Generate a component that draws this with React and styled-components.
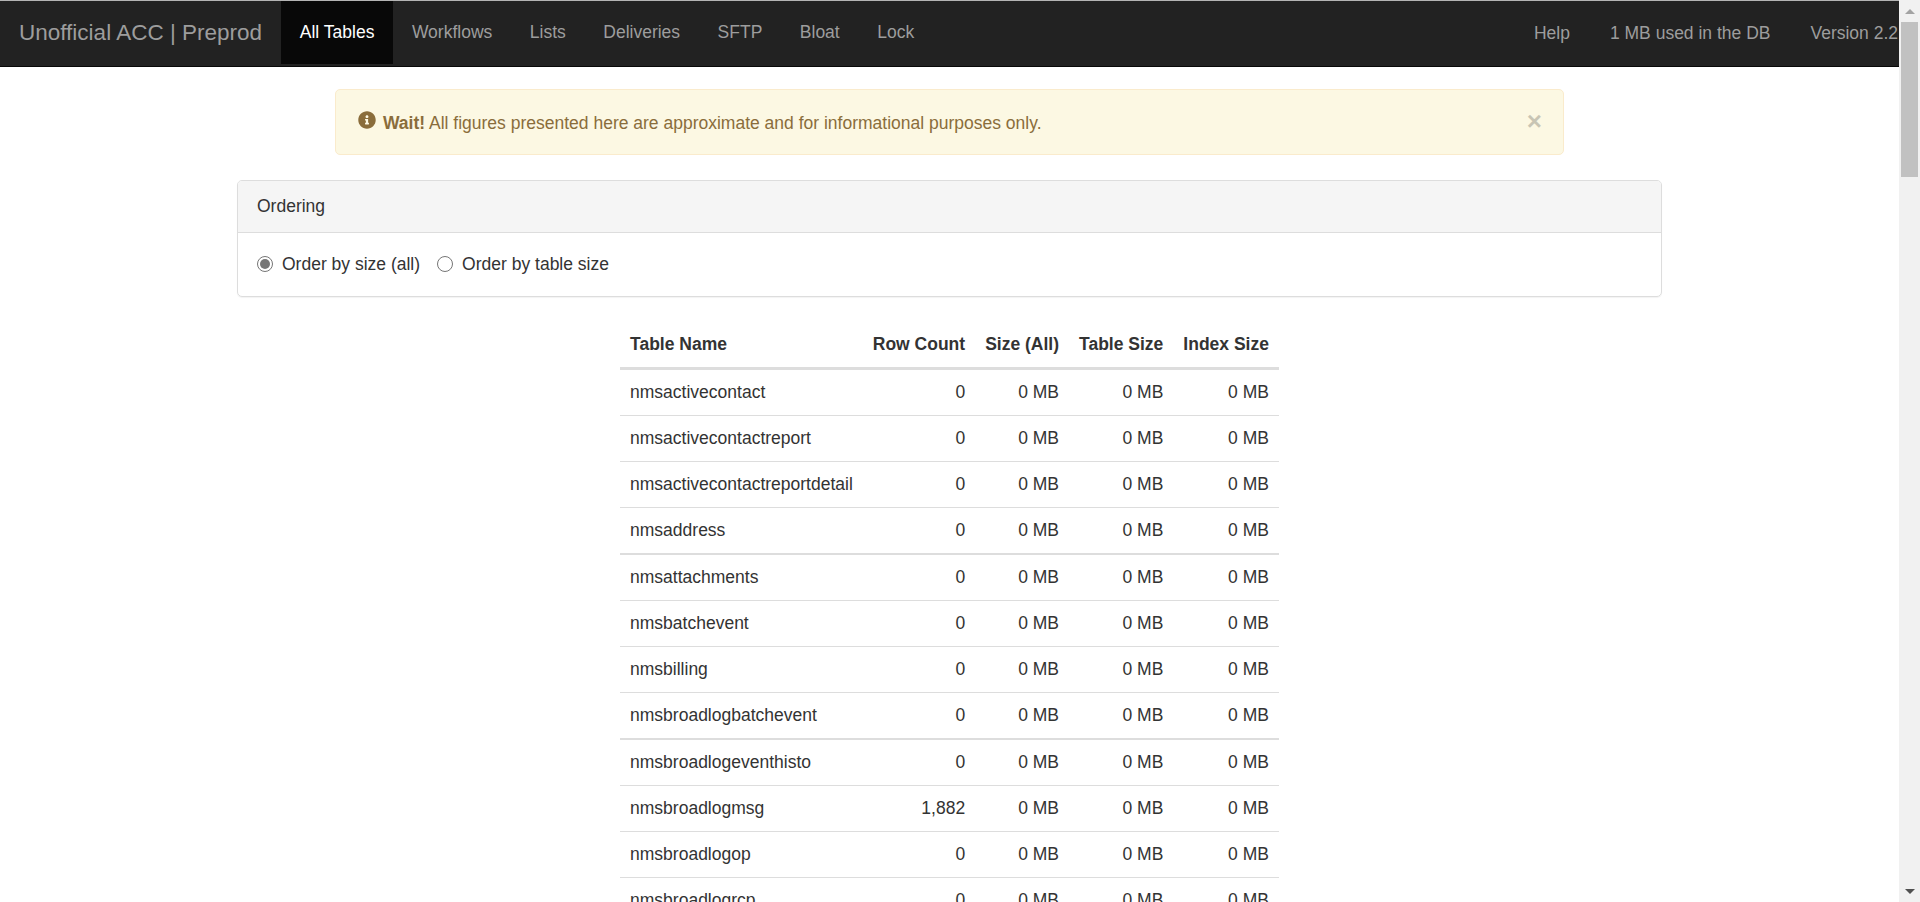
import React from 'react';
import styled, { createGlobalStyle } from 'styled-components';
import { FaInfoCircle } from 'react-icons/fa';

const GlobalStyle = createGlobalStyle`
  html, body {
    margin: 0;
    height: 100%;
    overflow: hidden;
    background: #fff;
  }
  body {
    font-family: "Liberation Sans", Arial, sans-serif;
    font-size: 17.5px;
    line-height: 25px;
    color: #333;
  }
`;

const Window = styled.div`
  display: flex;
  height: 902px;
  overflow: hidden;
`;
const Page = styled.div`
  flex: 1;
  min-width: 0;
  overflow: hidden;
`;
const Navbar = styled.nav`
  display: flex;
  justify-content: space-between;
  height: 63px;
  padding-bottom: 2px;
  box-sizing: content-box;
  background: #222;
  border-top: 1px solid #b4b4b4;
  border-bottom: 1px solid #080808;
  overflow: hidden;
  white-space: nowrap;
`;
const NavGroup = styled.div`
  display: flex;
  align-items: stretch;
`;
const Brand = styled.a`
  display: flex;
  align-items: center;
  padding: 0 19px;
  font-size: 22.5px;
  color: #9d9d9d;
`;
const NavLink = styled.a`
  display: flex;
  align-items: center;
  padding: 0 18.75px;
  color: ${p => (p.$active ? '#fff' : '#9d9d9d')};
  background: ${p => (p.$active ? '#080808' : 'transparent')};
`;
const NavText = styled(NavLink)`
  padding: 2px 20.5px 0;
  &:first-child {
    padding-right: 19.5px;
  }
  &:last-child {
    padding-left: 19.5px;
    padding-right: 1px;
  }
`;
const Container = styled.div`
  width: 1425px;
  margin: 22px auto 0;
`;
const Alert = styled.div`
  display: flex;
  align-items: center;
  box-sizing: border-box;
  width: 1229px;
  height: 66px;
  margin: 0 auto 25px;
  padding: 0 21px 0 22px;
  background: #fcf8e3;
  border: 1px solid #faebcc;
  border-radius: 5px;
  color: #8a6d3b;
`;
const AlertIcon = styled(FaInfoCircle)`
  width: 18px;
  height: 18px;
  margin: -5px 7px 0 0;
`;
const AlertText = styled.span`
  flex: 1;
  padding-top: 2px;
`;
const Close = styled.span`
  font-size: 26px;
  font-weight: bold;
  line-height: 1;
  color: #000;
  opacity: 0.2;
  margin-top: -3px;
`;
const Panel = styled.section`
  box-sizing: border-box;
  height: 117px;
  margin-bottom: 25px;
  border: 1px solid #ddd;
  border-radius: 5px;
  box-shadow: 0 1px 1px rgba(0, 0, 0, 0.05);
`;
const PanelHeading = styled.div`
  box-sizing: border-box;
  height: 52px;
  padding: 13px 19px;
  background: #f5f5f5;
  border-bottom: 1px solid #ddd;
  border-radius: 4px 4px 0 0;
`;
const PanelBody = styled.div`
  display: flex;
  align-items: center;
  height: 62px;
  padding: 0 19px;
`;
const RadioLabel = styled.label`
  display: flex;
  align-items: center;
  margin-right: 17px;
`;
const Radio = styled.span`
  position: relative;
  box-sizing: border-box;
  width: 16px;
  height: 16px;
  margin-right: 9px;
  border: 1px solid #767676;
  border-radius: 50%;
  background: #fff;
  &::after {
    content: '';
    display: ${p => (p.$checked ? 'block' : 'none')};
    position: absolute;
    inset: 2px;
    border-radius: 50%;
    background: #767676;
  }
`;
const Table = styled.table`
  margin: 0 auto;
  border-collapse: separate;
  border-spacing: 0;
`;
const Th = styled.th`
  padding: 10px;
  height: 25px;
  text-align: ${p => (p.$left ? 'left' : 'right')};
  border-bottom: 3px solid #ddd;
  white-space: nowrap;
`;
const Td = styled.td`
  padding: 0 10px;
  text-align: ${p => (p.$left ? 'left' : 'right')};
  white-space: nowrap;
`;
// zoomed page: every fourth rule lands on two pixels and the row is a pixel taller
const Row = styled.tr`
  height: ${p => (p.$thick ? 47 : 46)}px;
  & > td {
    border-top: ${p => (p.$thick ? 2 : 1)}px solid #ddd;
  }
  &:first-child {
    height: 45px;
  }
  &:first-child > td {
    border-top: 0;
  }
`;
const Scrollbar = styled.div`
  flex: none;
  display: flex;
  flex-direction: column;
  align-items: center;
  box-sizing: border-box;
  width: 21px;
  height: 902px;
  background: #f1f1f1;
`;
const ScrollButton = styled.div`
  display: flex;
  align-items: center;
  justify-content: center;
  width: 100%;
  height: 22px;
  &::before {
    content: '';
    border-left: 5px solid transparent;
    border-right: 5px solid transparent;
    ${p => (p.$down ? 'border-top: 5px solid #505050;' : 'border-bottom: 5px solid #a3a3a3;')}
  }
`;
const ScrollThumb = styled.div`
  width: 17px;
  height: 155px;
  background: #c1c1c1;
`;
const ScrollSpace = styled.div`
  flex: 1;
`;

const tables = [
  ['nmsactivecontact', '0'],
  ['nmsactivecontactreport', '0'],
  ['nmsactivecontactreportdetail', '0'],
  ['nmsaddress', '0'],
  ['nmsattachments', '0'],
  ['nmsbatchevent', '0'],
  ['nmsbilling', '0'],
  ['nmsbroadlogbatchevent', '0'],
  ['nmsbroadlogeventhisto', '0'],
  ['nmsbroadlogmsg', '1,882'],
  ['nmsbroadlogop', '0'],
  ['nmsbroadlogrcp', '0'],
];

export default function App() {
  return (
    <Window>
      <GlobalStyle />
      <Page>
        <Navbar>
          <NavGroup>
            <Brand>Unofficial ACC | Preprod</Brand>
            <NavLink $active>All Tables</NavLink>
            <NavLink>Workflows</NavLink>
            <NavLink>Lists</NavLink>
            <NavLink>Deliveries</NavLink>
            <NavLink>SFTP</NavLink>
            <NavLink>Bloat</NavLink>
            <NavLink>Lock</NavLink>
          </NavGroup>
          <NavGroup>
            <NavText>Help</NavText>
            <NavText>1 MB used in the DB</NavText>
            <NavText>Version 2.2</NavText>
          </NavGroup>
        </Navbar>
        <Container>
          <Alert>
            <AlertIcon />
            <AlertText>
              <strong>Wait!</strong> All figures presented here are approximate and for informational purposes only.
            </AlertText>
            <Close>×</Close>
          </Alert>
          <Panel>
            <PanelHeading>Ordering</PanelHeading>
            <PanelBody>
              <RadioLabel>
                <Radio $checked />
                Order by size (all)
              </RadioLabel>
              <RadioLabel>
                <Radio />
                Order by table size
              </RadioLabel>
            </PanelBody>
          </Panel>
          <Table>
            <thead>
              <tr>
                <Th $left>Table Name</Th>
                <Th>Row Count</Th>
                <Th>Size (All)</Th>
                <Th>Table Size</Th>
                <Th>Index Size</Th>
              </tr>
            </thead>
            <tbody>
              {tables.map(([name, count], i) => (
                <Row key={name} $thick={i > 0 && i % 4 === 0}>
                  <Td $left>{name}</Td>
                  <Td>{count}</Td>
                  <Td>0 MB</Td>
                  <Td>0 MB</Td>
                  <Td>0 MB</Td>
                </Row>
              ))}
            </tbody>
          </Table>
        </Container>
      </Page>
      <Scrollbar>
        <ScrollButton />
        <ScrollThumb />
        <ScrollSpace />
        <ScrollButton $down />
      </Scrollbar>
    </Window>
  );
}
